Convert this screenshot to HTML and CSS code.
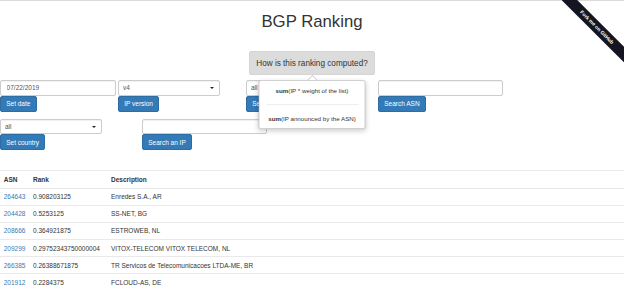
FILE: index.html
```html
<!DOCTYPE html>
<html lang="en">
<head>
    <meta charset="UTF-8">
    <meta name="viewport" content="width=device-width, initial-scale=1.0">
    <title>BGP Ranking</title>
    <link rel="stylesheet" href="styles.css">
</head>
<body>

    <div class="ribbon">
        <a class="ribbon-band" href="#">Fork me on GitHub</a>
    </div>

    <h1 class="title">BGP Ranking</h1>

    <div class="explain">
        <div class="explain-wrap">
            <button class="explain-btn">How is this ranking computed?</button>
            <div class="popover">
                <p><b>sum</b>(IP * weight of the list)</p>
                <hr>
                <p><b>sum</b>(IP announced by the ASN)</p>
            </div>
        </div>
    </div>

    <div class="filters">
        <form class="group group-date">
            <input type="text" class="field" value="07/22/2019">
            <button type="button" class="btn">Set date</button>
        </form>
        <form class="group group-version">
            <span class="select"><select class="field"><option>v4</option></select></span>
            <button type="button" class="btn">IP version</button>
        </form>
        <form class="group group-source">
            <span class="select"><select class="field"><option>all</option></select></span>
            <button type="button" class="btn">Set source</button>
        </form>
        <form class="group group-asn">
            <input type="text" class="field">
            <button type="button" class="btn">Search ASN</button>
        </form>
    </div>

    <div class="filters second">
        <form class="group group-country">
            <span class="select"><select class="field"><option>all</option></select></span>
            <button type="button" class="btn">Set country</button>
        </form>
        <form class="group group-ip">
            <input type="text" class="field">
            <button type="button" class="btn">Search an IP</button>
        </form>
    </div>

    <table class="ranking">
        <thead>
            <tr>
                <th class="col-asn">ASN</th>
                <th class="col-rank">Rank</th>
                <th>Description</th>
            </tr>
        </thead>
        <tbody>
            <tr><td><a href="#">264643</a></td><td>0.908203125</td><td>Enredes S.A., AR</td></tr>
            <tr><td><a href="#">204428</a></td><td>0.5253125</td><td>SS-NET, BG</td></tr>
            <tr><td><a href="#">208666</a></td><td>0.364921875</td><td>ESTROWEB, NL</td></tr>
            <tr><td><a href="#">209299</a></td><td>0.29752343750000004</td><td>VITOX-TELECOM VITOX TELECOM, NL</td></tr>
            <tr><td><a href="#">266385</a></td><td>0.26388671875</td><td>TR Servicos de Telecomunicacoes LTDA-ME, BR</td></tr>
            <tr><td><a href="#">201912</a></td><td>0.2284375</td><td>FCLOUD-AS, DE</td></tr>
        </tbody>
    </table>

</body>
</html>
```

FILE: styles.css
```css
body {
    font-family: 'Liberation Sans', Arial, sans-serif;
    font-size: 6.5px;
    line-height: 9.3px;
    color: #333;
    background: #fff;
    margin: 0;
    padding: 0;
    border-top: 1px solid #dcdcdc;
    overflow: hidden;
}

a {
    color: #337ab7;
    text-decoration: none;
}

.title {
    font-size: 16.74px;
    font-weight: normal;
    line-height: 18.4px;
    text-align: center;
    margin: 12px 0 0;
}

/* ranking explanation + popover */
.explain {
    display: flex;
    justify-content: center;
    margin-top: 19.6px;
}

.explain-wrap {
    position: relative;
}

.explain-btn {
    font-family: inherit;
    font-size: 8.2px;
    line-height: 11px;
    color: #333;
    background: #dcdcdc;
    border: 1px solid #d4d4d4;
    border-radius: 2px;
    padding: 5.5px 6px;
    height: 24px;
}

.popover {
    position: absolute;
    top: calc(100% + 5px);
    left: 50%;
    transform: translateX(-50%);
    width: 107px;
    box-sizing: border-box;
    padding: 4.6px 4px;
    background: #fff;
    border: 1px solid rgba(0, 0, 0, 0.18);
    border-radius: 2.5px;
    box-shadow: 0 2px 5px rgba(0, 0, 0, 0.2);
    text-align: center;
    font-size: 6.2px;
    white-space: nowrap;
    z-index: 5;
}

.popover::before,
.popover::after {
    content: "";
    position: absolute;
    left: 50%;
    transform: translateX(-50%);
    border-style: solid;
    border-color: transparent;
}

.popover::before {
    top: -6px;
    border-width: 0 5.5px 5.5px;
    border-bottom-color: rgba(0, 0, 0, 0.22);
}

.popover::after {
    top: -4.6px;
    border-width: 0 4.6px 4.6px;
    border-bottom-color: #fff;
}

.popover p {
    margin: 0;
}

.popover hr {
    border: 0;
    border-top: 1px solid #eee;
    margin: 9px 2.5px;
}

/* filter forms */
.filters {
    display: flex;
    align-items: flex-start;
    margin-top: 5px;
}

.filters.second {
    margin-top: 7px;
}

.group {
    display: flex;
    flex-direction: column;
    align-items: flex-start;
    margin: 0;
}

.group-date { width: 116px; margin-right: 2px; }
.group-version { width: 102px; margin-right: 26px; }
.group-source { width: 102px; margin-right: 30px; }
.group-asn { width: 125px; }
.group-country { width: 102px; margin-right: 40px; }
.group-ip { width: 125px; }

.field {
    display: block;
    width: 100%;
    height: 15.8px;
    box-sizing: border-box;
    padding: 0 5.6px;
    font-family: inherit;
    font-size: 6.5px;
    color: #555;
    background: #fff;
    border: 1px solid #ccc;
    border-radius: 2px;
    box-shadow: inset 0 1px 1px rgba(0, 0, 0, 0.06);
    outline: none;
}

select.field {
    appearance: none;
    -webkit-appearance: none;
    padding-left: 4px;
}

.select {
    position: relative;
    display: block;
    width: 100%;
}

.select::after {
    content: "";
    position: absolute;
    right: 6.5px;
    top: 7px;
    border-style: solid;
    border-width: 2.2px 2px 0;
    border-color: #222 transparent transparent;
}

.btn {
    font-family: inherit;
    font-size: 6.5px;
    line-height: 9.3px;
    color: #fff;
    background: #337ab7;
    border: 1px solid #2e6da4;
    border-radius: 2px;
    padding: 2.3px 5.2px;
    white-space: nowrap;
    cursor: pointer;
}

/* results table */
.ranking {
    width: 100%;
    border-collapse: collapse;
    table-layout: fixed;
    margin-top: 20px;
}

.ranking th,
.ranking td {
    text-align: left;
    padding: 3.45px 3.72px;
    line-height: 9.3px;
    border-top: 1px solid #e9e9e9;
    box-sizing: border-box;
    white-space: nowrap;
}

.ranking th {
    font-weight: bold;
}

.ranking .col-asn { width: 29.3px; }
.ranking .col-rank { width: 78px; }

/* github ribbon */
.ribbon {
    position: absolute;
    top: 0;
    right: 0;
    width: 62px;
    height: 62px;
    overflow: hidden;
    z-index: 10;
}

.ribbon-band {
    position: absolute;
    left: -14.75px;
    top: 21.5px;
    width: 100px;
    height: 10.5px;
    line-height: 10.5px;
    background: #151521;
    color: #fff;
    font-size: 5px;
    font-weight: bold;
    text-align: center;
    transform: rotate(45deg);
}
```
